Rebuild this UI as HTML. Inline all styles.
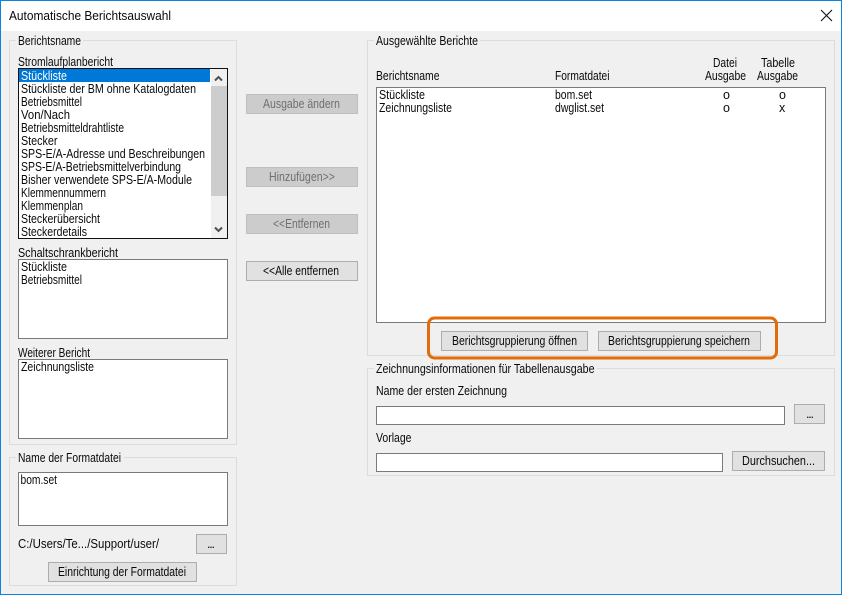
<!DOCTYPE html>
<html><head><meta charset="utf-8"><style>
html,body{margin:0;padding:0;width:842px;height:595px;overflow:hidden;background:#f0f0f0}
svg{display:block;position:absolute;left:0;top:0}
text{font-family:"Liberation Sans",sans-serif;font-size:12.5px;fill:#0a0a0a}
.d{fill:#6f6f6f}
.w{fill:#fff}
</style></head><body>
<svg width="842" height="595" viewBox="0 0 842 595" xmlns="http://www.w3.org/2000/svg">
<rect x="0" y="0" width="842" height="595" fill="#f0f0f0"/>
<rect x="0" y="0" width="842" height="31" fill="#fff"/>
<rect x=".5" y=".5" width="841" height="594" fill="none" stroke="#0a84dc"/>
<text x="9" y="20" textLength="162" lengthAdjust="spacingAndGlyphs">Automatische Berichtsauswahl</text>
<path d="M821 10L832 21M832 10L821 21" stroke="#111" stroke-width="1.1" fill="none"/>

<g fill="none" stroke="#dcdcdc">
<rect x="9.5" y="40.5" width="227" height="404"/>
<rect x="9.5" y="457.5" width="227" height="128"/>
<rect x="367.5" y="40.5" width="467" height="315"/>
<rect x="367.5" y="368.5" width="467" height="107"/>
</g>
<g fill="#f0f0f0">
<rect x="16" y="38" width="67" height="6"/>
<rect x="16" y="455" width="108" height="6"/>
<rect x="374" y="38" width="106" height="6"/>
<rect x="374" y="366" width="223" height="6"/>
</g>
<text x="18" y="45" textLength="63" lengthAdjust="spacingAndGlyphs">Berichtsname</text>
<text x="18" y="66" textLength="95" lengthAdjust="spacingAndGlyphs">Stromlaufplanbericht</text>

<rect x="18.5" y="68.5" width="209" height="170" fill="#fff" stroke="#111"/>
<rect x="19" y="69" width="191" height="13" fill="#0078d7"/>
<rect x="211" y="69" width="16" height="169" fill="#f0f0f0"/>
<rect x="211" y="86" width="16" height="110" fill="#cdcdcd"/>
<path d="M215 80.5L218.5 77L222 80.5" fill="none" stroke="#505050" stroke-width="2"/>
<path d="M215 227.5L218.5 231L222 227.5" fill="none" stroke="#505050" stroke-width="2"/>
<text class="w" x="21" y="80" textLength="46" lengthAdjust="spacingAndGlyphs">Stückliste</text>
<text x="21" y="93" textLength="175" lengthAdjust="spacingAndGlyphs">Stückliste der BM ohne Katalogdaten</text>
<text x="21" y="106" textLength="61" lengthAdjust="spacingAndGlyphs">Betriebsmittel</text>
<text x="21" y="119" textLength="49" lengthAdjust="spacingAndGlyphs">Von/Nach</text>
<text x="21" y="132" textLength="103" lengthAdjust="spacingAndGlyphs">Betriebsmitteldrahtliste</text>
<text x="21" y="145" textLength="36.5" lengthAdjust="spacingAndGlyphs">Stecker</text>
<text x="21" y="158" textLength="184" lengthAdjust="spacingAndGlyphs">SPS-E/A-Adresse und Beschreibungen</text>
<text x="21" y="171" textLength="160" lengthAdjust="spacingAndGlyphs">SPS-E/A-Betriebsmittelverbindung</text>
<text x="21" y="184" textLength="171" lengthAdjust="spacingAndGlyphs">Bisher verwendete SPS-E/A-Module</text>
<text x="21" y="197" textLength="85" lengthAdjust="spacingAndGlyphs">Klemmennummern</text>
<text x="21" y="210" textLength="62" lengthAdjust="spacingAndGlyphs">Klemmenplan</text>
<text x="21" y="223" textLength="79" lengthAdjust="spacingAndGlyphs">Steckerübersicht</text>
<text x="21" y="236" textLength="66" lengthAdjust="spacingAndGlyphs">Steckerdetails</text>

<text x="18" y="257" textLength="100" lengthAdjust="spacingAndGlyphs">Schaltschrankbericht</text>
<rect x="18.5" y="259.5" width="209" height="79" fill="#fff" stroke="#7a7a7a"/>
<text x="21" y="271" textLength="46" lengthAdjust="spacingAndGlyphs">Stückliste</text>
<text x="21" y="284" textLength="61" lengthAdjust="spacingAndGlyphs">Betriebsmittel</text>

<text x="18" y="357" textLength="72" lengthAdjust="spacingAndGlyphs">Weiterer Bericht</text>
<rect x="18.5" y="359.5" width="209" height="79" fill="#fff" stroke="#7a7a7a"/>
<text x="21" y="371" textLength="73" lengthAdjust="spacingAndGlyphs">Zeichnungsliste</text>

<text x="18" y="462" textLength="103" lengthAdjust="spacingAndGlyphs">Name der Formatdatei</text>
<rect x="18.5" y="472.5" width="209" height="53" fill="#fff" stroke="#7a7a7a"/>
<text x="20.5" y="484" textLength="36.5" lengthAdjust="spacingAndGlyphs">bom.set</text>
<text x="18" y="548" textLength="141" lengthAdjust="spacingAndGlyphs">C:/Users/Te.../Support/user/</text>
<rect x="196.5" y="534.5" width="30" height="19" fill="#e1e1e1" stroke="#adadad"/>
<text x="207" y="548" textLength="8" lengthAdjust="spacing">...</text>
<rect x="48.5" y="562.5" width="148" height="19" fill="#e1e1e1" stroke="#adadad"/>
<text x="58" y="576" textLength="128" lengthAdjust="spacingAndGlyphs">Einrichtung der Formatdatei</text>

<g fill="#cccccc" stroke="#bfbfbf">
<rect x="246.5" y="94.5" width="111" height="19"/>
<rect x="246.5" y="167.5" width="111" height="19"/>
<rect x="246.5" y="214.5" width="111" height="19"/>
</g>
<rect x="246.5" y="261.5" width="111" height="19" fill="#e1e1e1" stroke="#adadad"/>
<text class="d" x="263" y="108" textLength="77" lengthAdjust="spacingAndGlyphs">Ausgabe ändern</text>
<text class="d" x="269" y="181" textLength="66" lengthAdjust="spacingAndGlyphs">Hinzufügen&gt;&gt;</text>
<text class="d" x="273" y="228" textLength="57" lengthAdjust="spacingAndGlyphs">&lt;&lt;Entfernen</text>
<text x="263" y="275" textLength="76" lengthAdjust="spacingAndGlyphs">&lt;&lt;Alle entfernen</text>

<text x="376" y="45" textLength="102" lengthAdjust="spacingAndGlyphs">Ausgewählte Berichte</text>
<text x="376" y="80" textLength="63.5" lengthAdjust="spacingAndGlyphs">Berichtsname</text>
<text x="555" y="80" textLength="54.5" lengthAdjust="spacingAndGlyphs">Formatdatei</text>
<text x="713" y="67" textLength="24" lengthAdjust="spacingAndGlyphs">Datei</text>
<text x="705" y="80" textLength="41" lengthAdjust="spacingAndGlyphs">Ausgabe</text>
<text x="761" y="67" textLength="34" lengthAdjust="spacingAndGlyphs">Tabelle</text>
<text x="757" y="80" textLength="41" lengthAdjust="spacingAndGlyphs">Ausgabe</text>
<rect x="376.5" y="87.5" width="449" height="235" fill="#fff" stroke="#7a7a7a"/>
<text x="379" y="99" textLength="46" lengthAdjust="spacingAndGlyphs">Stückliste</text>
<text x="379" y="112" textLength="73" lengthAdjust="spacingAndGlyphs">Zeichnungsliste</text>
<text x="555" y="99" textLength="37" lengthAdjust="spacingAndGlyphs">bom.set</text>
<text x="555" y="112" textLength="49" lengthAdjust="spacingAndGlyphs">dwglist.set</text>
<text x="723" y="99">o</text>
<text x="723" y="112">o</text>
<text x="779" y="99">o</text>
<text x="779" y="112">x</text>

<rect x="441.5" y="331.5" width="146" height="19" fill="#e1e1e1" stroke="#adadad"/>
<rect x="598.5" y="331.5" width="162" height="19" fill="#e1e1e1" stroke="#adadad"/>
<text x="452" y="345" textLength="125" lengthAdjust="spacingAndGlyphs">Berichtsgruppierung öffnen</text>
<text x="608" y="345" textLength="142" lengthAdjust="spacingAndGlyphs">Berichtsgruppierung speichern</text>
<rect x="428.5" y="318" width="348" height="40" rx="6" ry="6" fill="none" stroke="#e36c0a" stroke-width="3"/>

<text x="376" y="373" textLength="218.5" lengthAdjust="spacingAndGlyphs">Zeichnungsinformationen für Tabellenausgabe</text>
<text x="376" y="395" textLength="131" lengthAdjust="spacingAndGlyphs">Name der ersten Zeichnung</text>
<rect x="376.5" y="406.5" width="408" height="18" fill="#fff" stroke="#7a7a7a"/>
<rect x="794.5" y="404.5" width="30" height="19" fill="#e1e1e1" stroke="#adadad"/>
<text x="806" y="418" textLength="8" lengthAdjust="spacing">...</text>
<text x="376" y="442" textLength="35.5" lengthAdjust="spacingAndGlyphs">Vorlage</text>
<rect x="376.5" y="453.5" width="346" height="18" fill="#fff" stroke="#7a7a7a"/>
<rect x="732.5" y="451.5" width="92" height="19" fill="#e1e1e1" stroke="#adadad"/>
<text x="742" y="465" textLength="73" lengthAdjust="spacingAndGlyphs">Durchsuchen...</text>
</svg>
</body></html>
